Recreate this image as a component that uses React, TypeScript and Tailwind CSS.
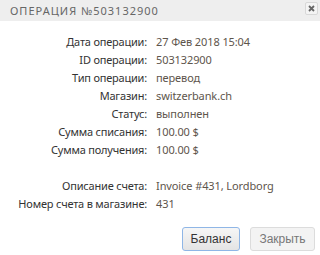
import React from "react";

const rows: [string, string][] = [
  ["Дата операции:", "27 Фев 2018 15:04"],
  ["ID операции:", "503132900"],
  ["Тип операции:", "перевод"],
  ["Магазин:", "switzerbank.ch"],
  ["Статус:", "выполнен"],
  ["Сумма списания:", "100.00 $"],
  ["Сумма получения:", "100.00 $"],
  ["", ""],
  ["Описание счета:", "Invoice #431, Lordborg"],
  ["Номер счета в магазине:", "431"],
];

export default function App() {
  return (
    <div className="w-[320px] h-[255px] bg-white overflow-hidden" style={{ fontFamily: '"Noto Sans", sans-serif' }}>
      <div className="h-[21px] bg-[#eeeeee] flex items-center justify-between pl-[10px] pr-[2px]">
        <span className="text-[11px] tracking-[1px] text-[#666666] leading-none">ОПЕРАЦИЯ №503132900</span>
        <div className="w-[13px] h-[13px] mb-[4px] border border-[#d8d8d8] rounded-[2px] bg-[#f4f4f4] flex items-center justify-center">
          <svg width="7" height="7" viewBox="0 0 7 7">
            <path d="M1 1L6 6M6 1L1 6" stroke="#666" strokeWidth="1.8" />
          </svg>
        </div>
      </div>
      <div className="grid grid-cols-[147px_1fr] gap-x-[9px] pt-[12px]">
        {rows.map(([l, v], i) => (
          <React.Fragment key={i}>
            <div className="h-[18px] flex items-center justify-end text-[11px] tracking-[-0.2px] text-[#333333] whitespace-nowrap">{l}</div>
            <div className="h-[18px] flex items-center text-[11px] tracking-[-0.1px] text-[#5e554c] whitespace-nowrap">{v}</div>
          </React.Fragment>
        ))}
      </div>
      <div className="flex justify-end gap-[10px] pr-[5px] mt-[14px]" style={{ fontFamily: '"Liberation Sans", sans-serif' }}>
        <button className="w-[58px] h-[24px] border border-[#8fb6e6] rounded-[3px] bg-gradient-to-b from-[#f6f6f6] to-[#e4e4e4] text-[12px] text-[#333]">Баланс</button>
        <button className="w-[65px] h-[24px] border border-[#dcdcdc] rounded-[3px] bg-[#f3f3f3] text-[12px] text-[#777]">Закрыть</button>
      </div>
    </div>
  );
}
